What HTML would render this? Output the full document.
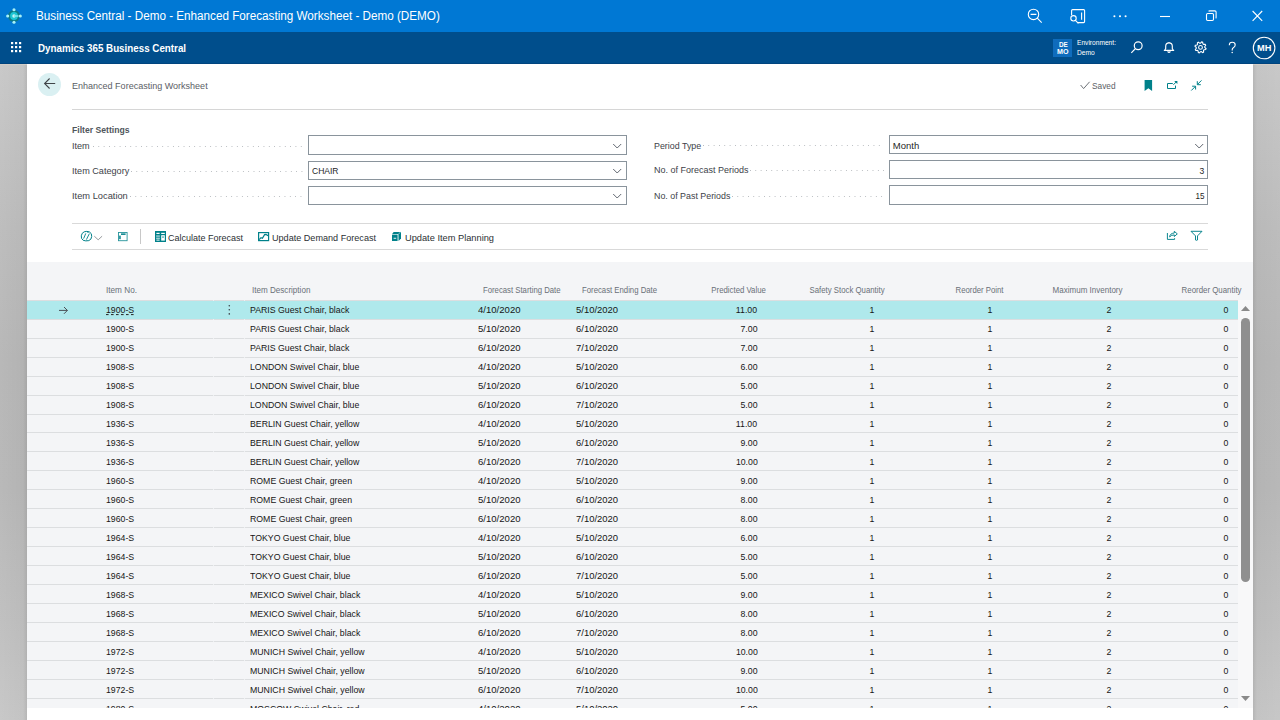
<!DOCTYPE html>
<html><head><meta charset="utf-8"><title>Enhanced Forecasting Worksheet</title>
<style>
html,body{margin:0;padding:0;width:1280px;height:720px;overflow:hidden;background:#fff;font-family:"Liberation Sans",sans-serif;}
body{position:relative;}
.t{position:absolute;white-space:nowrap;line-height:0;height:0;transform-origin:left;}
.a{position:absolute;box-sizing:border-box;}
#tclip{position:absolute;left:0;top:0;width:1280px;height:708px;overflow:hidden;}
svg{position:absolute;overflow:visible;}

</style></head><body>
<div class="a" style="left:0;top:0;width:1280px;height:32px;background:#0078d4"></div><div class="a" style="left:0;top:32px;width:1280px;height:32px;background:#004e8c"></div><div class="a" style="left:0;top:64px;width:27px;height:656px;background:linear-gradient(90deg,rgba(255,255,255,0.07),rgba(255,255,255,0) 85%,rgba(0,0,0,0.07)),linear-gradient(180deg,#c5c5c5 0%,#b9b9b9 25%,#b3b3b3 45%,#b4b4b4 65%,#bcbcbc 85%,#c4c4c4 100%)"></div><div class="a" style="left:1253px;top:64px;width:27px;height:656px;background:linear-gradient(90deg,rgba(0,0,0,0.07),rgba(0,0,0,0) 15%,rgba(255,255,255,0.06)),linear-gradient(180deg,#c5c5c5 0%,#b9b9b9 25%,#b3b3b3 45%,#b4b4b4 65%,#bcbcbc 85%,#c4c4c4 100%)"></div><div class="a" style="left:0;top:64px;width:27px;height:1px;background:#d3cdc7"></div><div class="a" style="left:1253px;top:64px;width:27px;height:1px;background:#d3cdc7"></div><div class="a" style="left:0;top:63px;width:1280px;height:1px;background:#00447e"></div><div class="a" style="left:1053px;top:39px;width:19px;height:18px;background:#0f6cbd"></div><div class="a" style="left:72px;top:109px;width:1136px;height:1px;background:#d6d6d6"></div><div class="a" style="left:38px;top:73px;width:23px;height:23px;border-radius:50%;background:#daf0f2"></div><div class="a" style="left:308px;top:135px;width:319px;height:20px;border:1px solid #8a949c;background:#fff"></div><div class="a" style="left:308px;top:161px;width:319px;height:19px;border:1px solid #8a949c;background:#fff"></div><div class="a" style="left:308px;top:186px;width:319px;height:19px;border:1px solid #8a949c;background:#fff"></div><div class="a" style="left:889px;top:135px;width:319px;height:19px;border:1px solid #8a949c;background:#fff"></div><div class="a" style="left:889px;top:160px;width:319px;height:19px;border:1px solid #8a949c;background:#fff"></div><div class="a" style="left:889px;top:185px;width:319px;height:20px;border:1px solid #8a949c;background:#fff"></div><div class="a" style="left:72px;top:223px;width:1136px;height:1px;background:#d9d9d9"></div><div class="a" style="left:72px;top:249px;width:1136px;height:1px;background:#d9d9d9"></div><div class="a" style="left:140px;top:229px;width:1px;height:15px;background:#c8c8c8"></div><div class="a" style="left:27px;top:262px;width:1226px;height:446px;background:#f4f5f7"></div><div class="a" style="left:1238px;top:300px;width:15px;height:408px;background:#f8f8f9"></div><div class="a" style="left:27px;top:300px;width:1211px;height:1px;background:#dcdee0"></div><div class="a" style="left:27px;top:319px;width:1211px;height:1px;background:#dcdee0"></div><div class="a" style="left:27px;top:338px;width:1211px;height:1px;background:#dcdee0"></div><div class="a" style="left:27px;top:357px;width:1211px;height:1px;background:#dcdee0"></div><div class="a" style="left:27px;top:376px;width:1211px;height:1px;background:#dcdee0"></div><div class="a" style="left:27px;top:395px;width:1211px;height:1px;background:#dcdee0"></div><div class="a" style="left:27px;top:414px;width:1211px;height:1px;background:#dcdee0"></div><div class="a" style="left:27px;top:432px;width:1211px;height:1px;background:#dcdee0"></div><div class="a" style="left:27px;top:451px;width:1211px;height:1px;background:#dcdee0"></div><div class="a" style="left:27px;top:470px;width:1211px;height:1px;background:#dcdee0"></div><div class="a" style="left:27px;top:489px;width:1211px;height:1px;background:#dcdee0"></div><div class="a" style="left:27px;top:508px;width:1211px;height:1px;background:#dcdee0"></div><div class="a" style="left:27px;top:527px;width:1211px;height:1px;background:#dcdee0"></div><div class="a" style="left:27px;top:546px;width:1211px;height:1px;background:#dcdee0"></div><div class="a" style="left:27px;top:565px;width:1211px;height:1px;background:#dcdee0"></div><div class="a" style="left:27px;top:584px;width:1211px;height:1px;background:#dcdee0"></div><div class="a" style="left:27px;top:603px;width:1211px;height:1px;background:#dcdee0"></div><div class="a" style="left:27px;top:622px;width:1211px;height:1px;background:#dcdee0"></div><div class="a" style="left:27px;top:641px;width:1211px;height:1px;background:#dcdee0"></div><div class="a" style="left:27px;top:660px;width:1211px;height:1px;background:#dcdee0"></div><div class="a" style="left:27px;top:679px;width:1211px;height:1px;background:#dcdee0"></div><div class="a" style="left:27px;top:698px;width:1211px;height:1px;background:#dcdee0"></div><div class="a" style="left:27px;top:301px;width:1211px;height:18px;background:#afe9ec"></div><div class="a" style="left:213px;top:300px;width:1px;height:1px;background:#eef0f2"></div><div class="a" style="left:244px;top:300px;width:1px;height:1px;background:#eef0f2"></div><div class="a" style="left:213px;top:319px;width:1px;height:1px;background:#eef0f2"></div><div class="a" style="left:244px;top:319px;width:1px;height:1px;background:#eef0f2"></div><div class="a" style="left:213px;top:338px;width:1px;height:1px;background:#eef0f2"></div><div class="a" style="left:244px;top:338px;width:1px;height:1px;background:#eef0f2"></div><div class="a" style="left:213px;top:357px;width:1px;height:1px;background:#eef0f2"></div><div class="a" style="left:244px;top:357px;width:1px;height:1px;background:#eef0f2"></div><div class="a" style="left:213px;top:376px;width:1px;height:1px;background:#eef0f2"></div><div class="a" style="left:244px;top:376px;width:1px;height:1px;background:#eef0f2"></div><div class="a" style="left:213px;top:395px;width:1px;height:1px;background:#eef0f2"></div><div class="a" style="left:244px;top:395px;width:1px;height:1px;background:#eef0f2"></div><div class="a" style="left:213px;top:414px;width:1px;height:1px;background:#eef0f2"></div><div class="a" style="left:244px;top:414px;width:1px;height:1px;background:#eef0f2"></div><div class="a" style="left:213px;top:432px;width:1px;height:1px;background:#eef0f2"></div><div class="a" style="left:244px;top:432px;width:1px;height:1px;background:#eef0f2"></div><div class="a" style="left:213px;top:451px;width:1px;height:1px;background:#eef0f2"></div><div class="a" style="left:244px;top:451px;width:1px;height:1px;background:#eef0f2"></div><div class="a" style="left:213px;top:470px;width:1px;height:1px;background:#eef0f2"></div><div class="a" style="left:244px;top:470px;width:1px;height:1px;background:#eef0f2"></div><div class="a" style="left:213px;top:489px;width:1px;height:1px;background:#eef0f2"></div><div class="a" style="left:244px;top:489px;width:1px;height:1px;background:#eef0f2"></div><div class="a" style="left:213px;top:508px;width:1px;height:1px;background:#eef0f2"></div><div class="a" style="left:244px;top:508px;width:1px;height:1px;background:#eef0f2"></div><div class="a" style="left:213px;top:527px;width:1px;height:1px;background:#eef0f2"></div><div class="a" style="left:244px;top:527px;width:1px;height:1px;background:#eef0f2"></div><div class="a" style="left:213px;top:546px;width:1px;height:1px;background:#eef0f2"></div><div class="a" style="left:244px;top:546px;width:1px;height:1px;background:#eef0f2"></div><div class="a" style="left:213px;top:565px;width:1px;height:1px;background:#eef0f2"></div><div class="a" style="left:244px;top:565px;width:1px;height:1px;background:#eef0f2"></div><div class="a" style="left:213px;top:584px;width:1px;height:1px;background:#eef0f2"></div><div class="a" style="left:244px;top:584px;width:1px;height:1px;background:#eef0f2"></div><div class="a" style="left:213px;top:603px;width:1px;height:1px;background:#eef0f2"></div><div class="a" style="left:244px;top:603px;width:1px;height:1px;background:#eef0f2"></div><div class="a" style="left:213px;top:622px;width:1px;height:1px;background:#eef0f2"></div><div class="a" style="left:244px;top:622px;width:1px;height:1px;background:#eef0f2"></div><div class="a" style="left:213px;top:641px;width:1px;height:1px;background:#eef0f2"></div><div class="a" style="left:244px;top:641px;width:1px;height:1px;background:#eef0f2"></div><div class="a" style="left:213px;top:660px;width:1px;height:1px;background:#eef0f2"></div><div class="a" style="left:244px;top:660px;width:1px;height:1px;background:#eef0f2"></div><div class="a" style="left:213px;top:679px;width:1px;height:1px;background:#eef0f2"></div><div class="a" style="left:244px;top:679px;width:1px;height:1px;background:#eef0f2"></div><div class="a" style="left:213px;top:698px;width:1px;height:1px;background:#eef0f2"></div><div class="a" style="left:244px;top:698px;width:1px;height:1px;background:#eef0f2"></div><div class="a" style="left:93px;top:146px;width:210px;height:1px;background-image:linear-gradient(90deg,#b4b8bc 0,#b4b8bc 1px,transparent 1px);background-size:5.33px 1px"></div><div class="a" style="left:131px;top:171px;width:172px;height:1px;background-image:linear-gradient(90deg,#b4b8bc 0,#b4b8bc 1px,transparent 1px);background-size:5.33px 1px"></div><div class="a" style="left:130px;top:196px;width:173px;height:1px;background-image:linear-gradient(90deg,#b4b8bc 0,#b4b8bc 1px,transparent 1px);background-size:5.33px 1px"></div><div class="a" style="left:703px;top:145px;width:181px;height:1px;background-image:linear-gradient(90deg,#b4b8bc 0,#b4b8bc 1px,transparent 1px);background-size:5.33px 1px"></div><div class="a" style="left:750px;top:170px;width:134px;height:1px;background-image:linear-gradient(90deg,#b4b8bc 0,#b4b8bc 1px,transparent 1px);background-size:5.33px 1px"></div><div class="a" style="left:732px;top:196px;width:152px;height:1px;background-image:linear-gradient(90deg,#b4b8bc 0,#b4b8bc 1px,transparent 1px);background-size:5.33px 1px"></div>
<div class="t" style="top:15.84px;font-size:12px;color:#fff;left:36.00px;transform:scaleX(0.974);">Business Central - Demo - Enhanced Forecasting Worksheet - Demo (DEMO)</div><div class="t" style="top:48.08px;font-size:11.3px;color:#fff;font-weight:700;left:37.80px;transform:scaleX(0.867);">Dynamics 365 Business Central</div><div class="t" style="top:42.57px;font-size:7px;color:#fff;left:1077.00px;transform:scaleX(0.945);">Environment:</div><div class="t" style="top:52.57px;font-size:7px;color:#fff;left:1077.00px;transform:scaleX(0.947);">Demo</div><div class="t" style="top:44.75px;font-size:6.5px;color:#fff;font-weight:700;left:1058.70px;transform:scaleX(0.974);">DE</div><div class="t" style="top:51.75px;font-size:6.5px;color:#fff;font-weight:700;left:1057.20px;transform:scaleX(1.097);">MO</div><div class="t" style="top:47.71px;font-size:9.5px;color:#fff;font-weight:700;left:1257.20px;transform:scaleX(0.974);">MH</div><div class="t" style="top:85.71px;font-size:9.5px;color:#5b6066;left:72.30px;transform:scaleX(0.949);">Enhanced Forecasting Worksheet</div><div class="t" style="top:85.71px;font-size:9.5px;color:#5b6066;left:1091.70px;transform:scaleX(0.872);">Saved</div><div class="t" style="top:129.71px;font-size:9.5px;color:#50565c;font-weight:700;left:72.20px;transform:scaleX(0.908);">Filter Settings</div><div class="t" style="top:145.71px;font-size:9.5px;color:#3d4248;left:72.20px;transform:scaleX(0.958);">Item</div><div class="t" style="top:170.71px;font-size:9.5px;color:#3d4248;left:72.20px;transform:scaleX(0.959);">Item Category</div><div class="t" style="top:195.71px;font-size:9.5px;color:#3d4248;left:72.20px;transform:scaleX(0.978);">Item Location</div><div class="t" style="top:145.71px;font-size:9.5px;color:#3d4248;left:653.80px;transform:scaleX(0.934);">Period Type</div><div class="t" style="top:169.71px;font-size:9.5px;color:#3d4248;left:653.80px;transform:scaleX(0.946);">No. of Forecast Periods</div><div class="t" style="top:195.71px;font-size:9.5px;color:#3d4248;left:653.80px;transform:scaleX(0.933);">No. of Past Periods</div><div class="t" style="top:170.71px;font-size:9.5px;color:#1f1f1f;left:311.70px;transform:scaleX(0.896);">CHAIR</div><div class="t" style="top:145.71px;font-size:9.5px;color:#1f1f1f;left:892.80px;">Month</div><div class="t" style="top:170.71px;font-size:9.5px;color:#1f1f1f;right:75.90px;transform-origin:right;transform:scaleX(0.900);">3</div><div class="t" style="top:195.71px;font-size:9.5px;color:#1f1f1f;right:75.90px;transform-origin:right;transform:scaleX(0.851);">15</div><div class="t" style="top:237.71px;font-size:9.5px;color:#2b2f33;left:168.00px;transform:scaleX(0.947);">Calculate Forecast</div><div class="t" style="top:237.71px;font-size:9.5px;color:#2b2f33;left:271.50px;transform:scaleX(0.956);">Update Demand Forecast</div><div class="t" style="top:237.71px;font-size:9.5px;color:#2b2f33;left:404.90px;transform:scaleX(0.974);">Update Item Planning</div><div class="t" style="top:289.88px;font-size:9px;color:#6a7077;left:106.00px;transform:scaleX(0.911);">Item No.</div><div class="t" style="top:289.88px;font-size:9px;color:#6a7077;left:251.60px;transform:scaleX(0.898);">Item Description</div><div class="t" style="top:289.88px;font-size:9px;color:#6a7077;left:483.00px;transform:scaleX(0.861);">Forecast Starting Date</div><div class="t" style="top:289.88px;font-size:9px;color:#6a7077;left:582.00px;transform:scaleX(0.862);">Forecast Ending Date</div><div class="t" style="top:289.88px;font-size:9px;color:#6a7077;right:514.50px;transform-origin:right;transform:scaleX(0.867);">Predicted Value</div><div class="t" style="top:289.88px;font-size:9px;color:#6a7077;right:395.30px;transform-origin:right;transform:scaleX(0.867);">Safety Stock Quantity</div><div class="t" style="top:289.88px;font-size:9px;color:#6a7077;right:276.00px;transform-origin:right;transform:scaleX(0.864);">Reorder Point</div><div class="t" style="top:289.88px;font-size:9px;color:#6a7077;right:157.20px;transform-origin:right;transform:scaleX(0.891);">Maximum Inventory</div><div class="t" style="top:289.88px;font-size:9px;color:#6a7077;right:38.20px;transform-origin:right;transform:scaleX(0.875);">Reorder Quantity</div>
<div id="tclip">
<div class="t" style="top:309.71px;font-size:9.5px;color:#161616;left:106.00px;transform:scaleX(0.920);">1900-S</div><div class="t" style="top:309.71px;font-size:9.5px;color:#161616;left:249.70px;transform:scaleX(0.920);">PARIS Guest Chair, black</div><div class="t" style="top:309.71px;font-size:9.5px;color:#161616;left:477.50px;transform:scaleX(1.006);">4/10/2020</div><div class="t" style="top:309.71px;font-size:9.5px;color:#161616;left:576.00px;transform:scaleX(0.994);">5/10/2020</div><div class="t" style="top:309.71px;font-size:9.5px;color:#161616;right:522.50px;transform-origin:right;transform:scaleX(0.920);">11.00</div><div class="t" style="top:309.71px;font-size:9.5px;color:#161616;right:405.50px;transform-origin:right;transform:scaleX(0.920);">1</div><div class="t" style="top:309.71px;font-size:9.5px;color:#161616;right:287.90px;transform-origin:right;transform:scaleX(0.920);">1</div><div class="t" style="top:309.71px;font-size:9.5px;color:#161616;right:169.20px;transform-origin:right;transform:scaleX(0.920);">2</div><div class="t" style="top:309.71px;font-size:9.5px;color:#161616;right:51.70px;transform-origin:right;transform:scaleX(0.920);">0</div><div class="t" style="top:328.71px;font-size:9.5px;color:#161616;left:106.00px;transform:scaleX(0.920);">1900-S</div><div class="t" style="top:328.71px;font-size:9.5px;color:#161616;left:249.70px;transform:scaleX(0.920);">PARIS Guest Chair, black</div><div class="t" style="top:328.71px;font-size:9.5px;color:#161616;left:477.50px;transform:scaleX(1.006);">5/10/2020</div><div class="t" style="top:328.71px;font-size:9.5px;color:#161616;left:576.00px;transform:scaleX(0.994);">6/10/2020</div><div class="t" style="top:328.71px;font-size:9.5px;color:#161616;right:522.50px;transform-origin:right;transform:scaleX(0.920);">7.00</div><div class="t" style="top:328.71px;font-size:9.5px;color:#161616;right:405.50px;transform-origin:right;transform:scaleX(0.920);">1</div><div class="t" style="top:328.71px;font-size:9.5px;color:#161616;right:287.90px;transform-origin:right;transform:scaleX(0.920);">1</div><div class="t" style="top:328.71px;font-size:9.5px;color:#161616;right:169.20px;transform-origin:right;transform:scaleX(0.920);">2</div><div class="t" style="top:328.71px;font-size:9.5px;color:#161616;right:51.70px;transform-origin:right;transform:scaleX(0.920);">0</div><div class="t" style="top:347.71px;font-size:9.5px;color:#161616;left:106.00px;transform:scaleX(0.920);">1900-S</div><div class="t" style="top:347.71px;font-size:9.5px;color:#161616;left:249.70px;transform:scaleX(0.920);">PARIS Guest Chair, black</div><div class="t" style="top:347.71px;font-size:9.5px;color:#161616;left:477.50px;transform:scaleX(1.006);">6/10/2020</div><div class="t" style="top:347.71px;font-size:9.5px;color:#161616;left:576.00px;transform:scaleX(0.994);">7/10/2020</div><div class="t" style="top:347.71px;font-size:9.5px;color:#161616;right:522.50px;transform-origin:right;transform:scaleX(0.920);">7.00</div><div class="t" style="top:347.71px;font-size:9.5px;color:#161616;right:405.50px;transform-origin:right;transform:scaleX(0.920);">1</div><div class="t" style="top:347.71px;font-size:9.5px;color:#161616;right:287.90px;transform-origin:right;transform:scaleX(0.920);">1</div><div class="t" style="top:347.71px;font-size:9.5px;color:#161616;right:169.20px;transform-origin:right;transform:scaleX(0.920);">2</div><div class="t" style="top:347.71px;font-size:9.5px;color:#161616;right:51.70px;transform-origin:right;transform:scaleX(0.920);">0</div><div class="t" style="top:366.71px;font-size:9.5px;color:#161616;left:106.00px;transform:scaleX(0.920);">1908-S</div><div class="t" style="top:366.71px;font-size:9.5px;color:#161616;left:249.70px;transform:scaleX(0.920);">LONDON Swivel Chair, blue</div><div class="t" style="top:366.71px;font-size:9.5px;color:#161616;left:477.50px;transform:scaleX(1.006);">4/10/2020</div><div class="t" style="top:366.71px;font-size:9.5px;color:#161616;left:576.00px;transform:scaleX(0.994);">5/10/2020</div><div class="t" style="top:366.71px;font-size:9.5px;color:#161616;right:522.50px;transform-origin:right;transform:scaleX(0.920);">6.00</div><div class="t" style="top:366.71px;font-size:9.5px;color:#161616;right:405.50px;transform-origin:right;transform:scaleX(0.920);">1</div><div class="t" style="top:366.71px;font-size:9.5px;color:#161616;right:287.90px;transform-origin:right;transform:scaleX(0.920);">1</div><div class="t" style="top:366.71px;font-size:9.5px;color:#161616;right:169.20px;transform-origin:right;transform:scaleX(0.920);">2</div><div class="t" style="top:366.71px;font-size:9.5px;color:#161616;right:51.70px;transform-origin:right;transform:scaleX(0.920);">0</div><div class="t" style="top:385.71px;font-size:9.5px;color:#161616;left:106.00px;transform:scaleX(0.920);">1908-S</div><div class="t" style="top:385.71px;font-size:9.5px;color:#161616;left:249.70px;transform:scaleX(0.920);">LONDON Swivel Chair, blue</div><div class="t" style="top:385.71px;font-size:9.5px;color:#161616;left:477.50px;transform:scaleX(1.006);">5/10/2020</div><div class="t" style="top:385.71px;font-size:9.5px;color:#161616;left:576.00px;transform:scaleX(0.994);">6/10/2020</div><div class="t" style="top:385.71px;font-size:9.5px;color:#161616;right:522.50px;transform-origin:right;transform:scaleX(0.920);">5.00</div><div class="t" style="top:385.71px;font-size:9.5px;color:#161616;right:405.50px;transform-origin:right;transform:scaleX(0.920);">1</div><div class="t" style="top:385.71px;font-size:9.5px;color:#161616;right:287.90px;transform-origin:right;transform:scaleX(0.920);">1</div><div class="t" style="top:385.71px;font-size:9.5px;color:#161616;right:169.20px;transform-origin:right;transform:scaleX(0.920);">2</div><div class="t" style="top:385.71px;font-size:9.5px;color:#161616;right:51.70px;transform-origin:right;transform:scaleX(0.920);">0</div><div class="t" style="top:404.71px;font-size:9.5px;color:#161616;left:106.00px;transform:scaleX(0.920);">1908-S</div><div class="t" style="top:404.71px;font-size:9.5px;color:#161616;left:249.70px;transform:scaleX(0.920);">LONDON Swivel Chair, blue</div><div class="t" style="top:404.71px;font-size:9.5px;color:#161616;left:477.50px;transform:scaleX(1.006);">6/10/2020</div><div class="t" style="top:404.71px;font-size:9.5px;color:#161616;left:576.00px;transform:scaleX(0.994);">7/10/2020</div><div class="t" style="top:404.71px;font-size:9.5px;color:#161616;right:522.50px;transform-origin:right;transform:scaleX(0.920);">5.00</div><div class="t" style="top:404.71px;font-size:9.5px;color:#161616;right:405.50px;transform-origin:right;transform:scaleX(0.920);">1</div><div class="t" style="top:404.71px;font-size:9.5px;color:#161616;right:287.90px;transform-origin:right;transform:scaleX(0.920);">1</div><div class="t" style="top:404.71px;font-size:9.5px;color:#161616;right:169.20px;transform-origin:right;transform:scaleX(0.920);">2</div><div class="t" style="top:404.71px;font-size:9.5px;color:#161616;right:51.70px;transform-origin:right;transform:scaleX(0.920);">0</div><div class="t" style="top:423.71px;font-size:9.5px;color:#161616;left:106.00px;transform:scaleX(0.920);">1936-S</div><div class="t" style="top:423.71px;font-size:9.5px;color:#161616;left:249.70px;transform:scaleX(0.920);">BERLIN Guest Chair, yellow</div><div class="t" style="top:423.71px;font-size:9.5px;color:#161616;left:477.50px;transform:scaleX(1.006);">4/10/2020</div><div class="t" style="top:423.71px;font-size:9.5px;color:#161616;left:576.00px;transform:scaleX(0.994);">5/10/2020</div><div class="t" style="top:423.71px;font-size:9.5px;color:#161616;right:522.50px;transform-origin:right;transform:scaleX(0.920);">11.00</div><div class="t" style="top:423.71px;font-size:9.5px;color:#161616;right:405.50px;transform-origin:right;transform:scaleX(0.920);">1</div><div class="t" style="top:423.71px;font-size:9.5px;color:#161616;right:287.90px;transform-origin:right;transform:scaleX(0.920);">1</div><div class="t" style="top:423.71px;font-size:9.5px;color:#161616;right:169.20px;transform-origin:right;transform:scaleX(0.920);">2</div><div class="t" style="top:423.71px;font-size:9.5px;color:#161616;right:51.70px;transform-origin:right;transform:scaleX(0.920);">0</div><div class="t" style="top:442.71px;font-size:9.5px;color:#161616;left:106.00px;transform:scaleX(0.920);">1936-S</div><div class="t" style="top:442.71px;font-size:9.5px;color:#161616;left:249.70px;transform:scaleX(0.920);">BERLIN Guest Chair, yellow</div><div class="t" style="top:442.71px;font-size:9.5px;color:#161616;left:477.50px;transform:scaleX(1.006);">5/10/2020</div><div class="t" style="top:442.71px;font-size:9.5px;color:#161616;left:576.00px;transform:scaleX(0.994);">6/10/2020</div><div class="t" style="top:442.71px;font-size:9.5px;color:#161616;right:522.50px;transform-origin:right;transform:scaleX(0.920);">9.00</div><div class="t" style="top:442.71px;font-size:9.5px;color:#161616;right:405.50px;transform-origin:right;transform:scaleX(0.920);">1</div><div class="t" style="top:442.71px;font-size:9.5px;color:#161616;right:287.90px;transform-origin:right;transform:scaleX(0.920);">1</div><div class="t" style="top:442.71px;font-size:9.5px;color:#161616;right:169.20px;transform-origin:right;transform:scaleX(0.920);">2</div><div class="t" style="top:442.71px;font-size:9.5px;color:#161616;right:51.70px;transform-origin:right;transform:scaleX(0.920);">0</div><div class="t" style="top:461.71px;font-size:9.5px;color:#161616;left:106.00px;transform:scaleX(0.920);">1936-S</div><div class="t" style="top:461.71px;font-size:9.5px;color:#161616;left:249.70px;transform:scaleX(0.920);">BERLIN Guest Chair, yellow</div><div class="t" style="top:461.71px;font-size:9.5px;color:#161616;left:477.50px;transform:scaleX(1.006);">6/10/2020</div><div class="t" style="top:461.71px;font-size:9.5px;color:#161616;left:576.00px;transform:scaleX(0.994);">7/10/2020</div><div class="t" style="top:461.71px;font-size:9.5px;color:#161616;right:522.50px;transform-origin:right;transform:scaleX(0.920);">10.00</div><div class="t" style="top:461.71px;font-size:9.5px;color:#161616;right:405.50px;transform-origin:right;transform:scaleX(0.920);">1</div><div class="t" style="top:461.71px;font-size:9.5px;color:#161616;right:287.90px;transform-origin:right;transform:scaleX(0.920);">1</div><div class="t" style="top:461.71px;font-size:9.5px;color:#161616;right:169.20px;transform-origin:right;transform:scaleX(0.920);">2</div><div class="t" style="top:461.71px;font-size:9.5px;color:#161616;right:51.70px;transform-origin:right;transform:scaleX(0.920);">0</div><div class="t" style="top:480.71px;font-size:9.5px;color:#161616;left:106.00px;transform:scaleX(0.920);">1960-S</div><div class="t" style="top:480.71px;font-size:9.5px;color:#161616;left:249.70px;transform:scaleX(0.920);">ROME Guest Chair, green</div><div class="t" style="top:480.71px;font-size:9.5px;color:#161616;left:477.50px;transform:scaleX(1.006);">4/10/2020</div><div class="t" style="top:480.71px;font-size:9.5px;color:#161616;left:576.00px;transform:scaleX(0.994);">5/10/2020</div><div class="t" style="top:480.71px;font-size:9.5px;color:#161616;right:522.50px;transform-origin:right;transform:scaleX(0.920);">9.00</div><div class="t" style="top:480.71px;font-size:9.5px;color:#161616;right:405.50px;transform-origin:right;transform:scaleX(0.920);">1</div><div class="t" style="top:480.71px;font-size:9.5px;color:#161616;right:287.90px;transform-origin:right;transform:scaleX(0.920);">1</div><div class="t" style="top:480.71px;font-size:9.5px;color:#161616;right:169.20px;transform-origin:right;transform:scaleX(0.920);">2</div><div class="t" style="top:480.71px;font-size:9.5px;color:#161616;right:51.70px;transform-origin:right;transform:scaleX(0.920);">0</div><div class="t" style="top:499.71px;font-size:9.5px;color:#161616;left:106.00px;transform:scaleX(0.920);">1960-S</div><div class="t" style="top:499.71px;font-size:9.5px;color:#161616;left:249.70px;transform:scaleX(0.920);">ROME Guest Chair, green</div><div class="t" style="top:499.71px;font-size:9.5px;color:#161616;left:477.50px;transform:scaleX(1.006);">5/10/2020</div><div class="t" style="top:499.71px;font-size:9.5px;color:#161616;left:576.00px;transform:scaleX(0.994);">6/10/2020</div><div class="t" style="top:499.71px;font-size:9.5px;color:#161616;right:522.50px;transform-origin:right;transform:scaleX(0.920);">8.00</div><div class="t" style="top:499.71px;font-size:9.5px;color:#161616;right:405.50px;transform-origin:right;transform:scaleX(0.920);">1</div><div class="t" style="top:499.71px;font-size:9.5px;color:#161616;right:287.90px;transform-origin:right;transform:scaleX(0.920);">1</div><div class="t" style="top:499.71px;font-size:9.5px;color:#161616;right:169.20px;transform-origin:right;transform:scaleX(0.920);">2</div><div class="t" style="top:499.71px;font-size:9.5px;color:#161616;right:51.70px;transform-origin:right;transform:scaleX(0.920);">0</div><div class="t" style="top:518.71px;font-size:9.5px;color:#161616;left:106.00px;transform:scaleX(0.920);">1960-S</div><div class="t" style="top:518.71px;font-size:9.5px;color:#161616;left:249.70px;transform:scaleX(0.920);">ROME Guest Chair, green</div><div class="t" style="top:518.71px;font-size:9.5px;color:#161616;left:477.50px;transform:scaleX(1.006);">6/10/2020</div><div class="t" style="top:518.71px;font-size:9.5px;color:#161616;left:576.00px;transform:scaleX(0.994);">7/10/2020</div><div class="t" style="top:518.71px;font-size:9.5px;color:#161616;right:522.50px;transform-origin:right;transform:scaleX(0.920);">8.00</div><div class="t" style="top:518.71px;font-size:9.5px;color:#161616;right:405.50px;transform-origin:right;transform:scaleX(0.920);">1</div><div class="t" style="top:518.71px;font-size:9.5px;color:#161616;right:287.90px;transform-origin:right;transform:scaleX(0.920);">1</div><div class="t" style="top:518.71px;font-size:9.5px;color:#161616;right:169.20px;transform-origin:right;transform:scaleX(0.920);">2</div><div class="t" style="top:518.71px;font-size:9.5px;color:#161616;right:51.70px;transform-origin:right;transform:scaleX(0.920);">0</div><div class="t" style="top:537.71px;font-size:9.5px;color:#161616;left:106.00px;transform:scaleX(0.920);">1964-S</div><div class="t" style="top:537.71px;font-size:9.5px;color:#161616;left:249.70px;transform:scaleX(0.920);">TOKYO Guest Chair, blue</div><div class="t" style="top:537.71px;font-size:9.5px;color:#161616;left:477.50px;transform:scaleX(1.006);">4/10/2020</div><div class="t" style="top:537.71px;font-size:9.5px;color:#161616;left:576.00px;transform:scaleX(0.994);">5/10/2020</div><div class="t" style="top:537.71px;font-size:9.5px;color:#161616;right:522.50px;transform-origin:right;transform:scaleX(0.920);">6.00</div><div class="t" style="top:537.71px;font-size:9.5px;color:#161616;right:405.50px;transform-origin:right;transform:scaleX(0.920);">1</div><div class="t" style="top:537.71px;font-size:9.5px;color:#161616;right:287.90px;transform-origin:right;transform:scaleX(0.920);">1</div><div class="t" style="top:537.71px;font-size:9.5px;color:#161616;right:169.20px;transform-origin:right;transform:scaleX(0.920);">2</div><div class="t" style="top:537.71px;font-size:9.5px;color:#161616;right:51.70px;transform-origin:right;transform:scaleX(0.920);">0</div><div class="t" style="top:556.71px;font-size:9.5px;color:#161616;left:106.00px;transform:scaleX(0.920);">1964-S</div><div class="t" style="top:556.71px;font-size:9.5px;color:#161616;left:249.70px;transform:scaleX(0.920);">TOKYO Guest Chair, blue</div><div class="t" style="top:556.71px;font-size:9.5px;color:#161616;left:477.50px;transform:scaleX(1.006);">5/10/2020</div><div class="t" style="top:556.71px;font-size:9.5px;color:#161616;left:576.00px;transform:scaleX(0.994);">6/10/2020</div><div class="t" style="top:556.71px;font-size:9.5px;color:#161616;right:522.50px;transform-origin:right;transform:scaleX(0.920);">5.00</div><div class="t" style="top:556.71px;font-size:9.5px;color:#161616;right:405.50px;transform-origin:right;transform:scaleX(0.920);">1</div><div class="t" style="top:556.71px;font-size:9.5px;color:#161616;right:287.90px;transform-origin:right;transform:scaleX(0.920);">1</div><div class="t" style="top:556.71px;font-size:9.5px;color:#161616;right:169.20px;transform-origin:right;transform:scaleX(0.920);">2</div><div class="t" style="top:556.71px;font-size:9.5px;color:#161616;right:51.70px;transform-origin:right;transform:scaleX(0.920);">0</div><div class="t" style="top:575.71px;font-size:9.5px;color:#161616;left:106.00px;transform:scaleX(0.920);">1964-S</div><div class="t" style="top:575.71px;font-size:9.5px;color:#161616;left:249.70px;transform:scaleX(0.920);">TOKYO Guest Chair, blue</div><div class="t" style="top:575.71px;font-size:9.5px;color:#161616;left:477.50px;transform:scaleX(1.006);">6/10/2020</div><div class="t" style="top:575.71px;font-size:9.5px;color:#161616;left:576.00px;transform:scaleX(0.994);">7/10/2020</div><div class="t" style="top:575.71px;font-size:9.5px;color:#161616;right:522.50px;transform-origin:right;transform:scaleX(0.920);">5.00</div><div class="t" style="top:575.71px;font-size:9.5px;color:#161616;right:405.50px;transform-origin:right;transform:scaleX(0.920);">1</div><div class="t" style="top:575.71px;font-size:9.5px;color:#161616;right:287.90px;transform-origin:right;transform:scaleX(0.920);">1</div><div class="t" style="top:575.71px;font-size:9.5px;color:#161616;right:169.20px;transform-origin:right;transform:scaleX(0.920);">2</div><div class="t" style="top:575.71px;font-size:9.5px;color:#161616;right:51.70px;transform-origin:right;transform:scaleX(0.920);">0</div><div class="t" style="top:594.71px;font-size:9.5px;color:#161616;left:106.00px;transform:scaleX(0.920);">1968-S</div><div class="t" style="top:594.71px;font-size:9.5px;color:#161616;left:249.70px;transform:scaleX(0.920);">MEXICO Swivel Chair, black</div><div class="t" style="top:594.71px;font-size:9.5px;color:#161616;left:477.50px;transform:scaleX(1.006);">4/10/2020</div><div class="t" style="top:594.71px;font-size:9.5px;color:#161616;left:576.00px;transform:scaleX(0.994);">5/10/2020</div><div class="t" style="top:594.71px;font-size:9.5px;color:#161616;right:522.50px;transform-origin:right;transform:scaleX(0.920);">9.00</div><div class="t" style="top:594.71px;font-size:9.5px;color:#161616;right:405.50px;transform-origin:right;transform:scaleX(0.920);">1</div><div class="t" style="top:594.71px;font-size:9.5px;color:#161616;right:287.90px;transform-origin:right;transform:scaleX(0.920);">1</div><div class="t" style="top:594.71px;font-size:9.5px;color:#161616;right:169.20px;transform-origin:right;transform:scaleX(0.920);">2</div><div class="t" style="top:594.71px;font-size:9.5px;color:#161616;right:51.70px;transform-origin:right;transform:scaleX(0.920);">0</div><div class="t" style="top:613.71px;font-size:9.5px;color:#161616;left:106.00px;transform:scaleX(0.920);">1968-S</div><div class="t" style="top:613.71px;font-size:9.5px;color:#161616;left:249.70px;transform:scaleX(0.920);">MEXICO Swivel Chair, black</div><div class="t" style="top:613.71px;font-size:9.5px;color:#161616;left:477.50px;transform:scaleX(1.006);">5/10/2020</div><div class="t" style="top:613.71px;font-size:9.5px;color:#161616;left:576.00px;transform:scaleX(0.994);">6/10/2020</div><div class="t" style="top:613.71px;font-size:9.5px;color:#161616;right:522.50px;transform-origin:right;transform:scaleX(0.920);">8.00</div><div class="t" style="top:613.71px;font-size:9.5px;color:#161616;right:405.50px;transform-origin:right;transform:scaleX(0.920);">1</div><div class="t" style="top:613.71px;font-size:9.5px;color:#161616;right:287.90px;transform-origin:right;transform:scaleX(0.920);">1</div><div class="t" style="top:613.71px;font-size:9.5px;color:#161616;right:169.20px;transform-origin:right;transform:scaleX(0.920);">2</div><div class="t" style="top:613.71px;font-size:9.5px;color:#161616;right:51.70px;transform-origin:right;transform:scaleX(0.920);">0</div><div class="t" style="top:632.71px;font-size:9.5px;color:#161616;left:106.00px;transform:scaleX(0.920);">1968-S</div><div class="t" style="top:632.71px;font-size:9.5px;color:#161616;left:249.70px;transform:scaleX(0.920);">MEXICO Swivel Chair, black</div><div class="t" style="top:632.71px;font-size:9.5px;color:#161616;left:477.50px;transform:scaleX(1.006);">6/10/2020</div><div class="t" style="top:632.71px;font-size:9.5px;color:#161616;left:576.00px;transform:scaleX(0.994);">7/10/2020</div><div class="t" style="top:632.71px;font-size:9.5px;color:#161616;right:522.50px;transform-origin:right;transform:scaleX(0.920);">8.00</div><div class="t" style="top:632.71px;font-size:9.5px;color:#161616;right:405.50px;transform-origin:right;transform:scaleX(0.920);">1</div><div class="t" style="top:632.71px;font-size:9.5px;color:#161616;right:287.90px;transform-origin:right;transform:scaleX(0.920);">1</div><div class="t" style="top:632.71px;font-size:9.5px;color:#161616;right:169.20px;transform-origin:right;transform:scaleX(0.920);">2</div><div class="t" style="top:632.71px;font-size:9.5px;color:#161616;right:51.70px;transform-origin:right;transform:scaleX(0.920);">0</div><div class="t" style="top:651.71px;font-size:9.5px;color:#161616;left:106.00px;transform:scaleX(0.920);">1972-S</div><div class="t" style="top:651.71px;font-size:9.5px;color:#161616;left:249.70px;transform:scaleX(0.920);">MUNICH Swivel Chair, yellow</div><div class="t" style="top:651.71px;font-size:9.5px;color:#161616;left:477.50px;transform:scaleX(1.006);">4/10/2020</div><div class="t" style="top:651.71px;font-size:9.5px;color:#161616;left:576.00px;transform:scaleX(0.994);">5/10/2020</div><div class="t" style="top:651.71px;font-size:9.5px;color:#161616;right:522.50px;transform-origin:right;transform:scaleX(0.920);">10.00</div><div class="t" style="top:651.71px;font-size:9.5px;color:#161616;right:405.50px;transform-origin:right;transform:scaleX(0.920);">1</div><div class="t" style="top:651.71px;font-size:9.5px;color:#161616;right:287.90px;transform-origin:right;transform:scaleX(0.920);">1</div><div class="t" style="top:651.71px;font-size:9.5px;color:#161616;right:169.20px;transform-origin:right;transform:scaleX(0.920);">2</div><div class="t" style="top:651.71px;font-size:9.5px;color:#161616;right:51.70px;transform-origin:right;transform:scaleX(0.920);">0</div><div class="t" style="top:670.71px;font-size:9.5px;color:#161616;left:106.00px;transform:scaleX(0.920);">1972-S</div><div class="t" style="top:670.71px;font-size:9.5px;color:#161616;left:249.70px;transform:scaleX(0.920);">MUNICH Swivel Chair, yellow</div><div class="t" style="top:670.71px;font-size:9.5px;color:#161616;left:477.50px;transform:scaleX(1.006);">5/10/2020</div><div class="t" style="top:670.71px;font-size:9.5px;color:#161616;left:576.00px;transform:scaleX(0.994);">6/10/2020</div><div class="t" style="top:670.71px;font-size:9.5px;color:#161616;right:522.50px;transform-origin:right;transform:scaleX(0.920);">9.00</div><div class="t" style="top:670.71px;font-size:9.5px;color:#161616;right:405.50px;transform-origin:right;transform:scaleX(0.920);">1</div><div class="t" style="top:670.71px;font-size:9.5px;color:#161616;right:287.90px;transform-origin:right;transform:scaleX(0.920);">1</div><div class="t" style="top:670.71px;font-size:9.5px;color:#161616;right:169.20px;transform-origin:right;transform:scaleX(0.920);">2</div><div class="t" style="top:670.71px;font-size:9.5px;color:#161616;right:51.70px;transform-origin:right;transform:scaleX(0.920);">0</div><div class="t" style="top:689.71px;font-size:9.5px;color:#161616;left:106.00px;transform:scaleX(0.920);">1972-S</div><div class="t" style="top:689.71px;font-size:9.5px;color:#161616;left:249.70px;transform:scaleX(0.920);">MUNICH Swivel Chair, yellow</div><div class="t" style="top:689.71px;font-size:9.5px;color:#161616;left:477.50px;transform:scaleX(1.006);">6/10/2020</div><div class="t" style="top:689.71px;font-size:9.5px;color:#161616;left:576.00px;transform:scaleX(0.994);">7/10/2020</div><div class="t" style="top:689.71px;font-size:9.5px;color:#161616;right:522.50px;transform-origin:right;transform:scaleX(0.920);">10.00</div><div class="t" style="top:689.71px;font-size:9.5px;color:#161616;right:405.50px;transform-origin:right;transform:scaleX(0.920);">1</div><div class="t" style="top:689.71px;font-size:9.5px;color:#161616;right:287.90px;transform-origin:right;transform:scaleX(0.920);">1</div><div class="t" style="top:689.71px;font-size:9.5px;color:#161616;right:169.20px;transform-origin:right;transform:scaleX(0.920);">2</div><div class="t" style="top:689.71px;font-size:9.5px;color:#161616;right:51.70px;transform-origin:right;transform:scaleX(0.920);">0</div><div class="t" style="top:708.71px;font-size:9.5px;color:#161616;left:106.00px;transform:scaleX(0.920);">1980-S</div><div class="t" style="top:708.71px;font-size:9.5px;color:#161616;left:249.70px;transform:scaleX(0.920);">MOSCOW Swivel Chair, red</div><div class="t" style="top:708.71px;font-size:9.5px;color:#161616;left:477.50px;transform:scaleX(1.006);">4/10/2020</div><div class="t" style="top:708.71px;font-size:9.5px;color:#161616;left:576.00px;transform:scaleX(0.994);">5/10/2020</div><div class="t" style="top:708.71px;font-size:9.5px;color:#161616;right:522.50px;transform-origin:right;transform:scaleX(0.920);">5.00</div><div class="t" style="top:708.71px;font-size:9.5px;color:#161616;right:405.50px;transform-origin:right;transform:scaleX(0.920);">1</div><div class="t" style="top:708.71px;font-size:9.5px;color:#161616;right:287.90px;transform-origin:right;transform:scaleX(0.920);">1</div><div class="t" style="top:708.71px;font-size:9.5px;color:#161616;right:169.20px;transform-origin:right;transform:scaleX(0.920);">2</div><div class="t" style="top:708.71px;font-size:9.5px;color:#161616;right:51.70px;transform-origin:right;transform:scaleX(0.920);">0</div>
</div>
<svg style="left:0;top:0" width="1280" height="720"><path d="M1241 311 L1250 311 L1245.5 306 Z" fill="#8a8a8a"/><path d="M1241 696 L1250 696 L1245.5 701 Z" fill="#8a8a8a"/><rect x="1241" y="318" width="9" height="264" rx="4.5" fill="#8f8f8f"/></svg><svg style="left:0;top:0" width="1280" height="720"><circle cx="14" cy="16" r="6" fill="#0b7a84"/><circle cx="14" cy="16" r="3.9" fill="#1cc6d3"/><circle cx="14" cy="16" r="1.7" fill="#c4f3f6"/><rect x="14" y="15.2" width="4.5" height="1.6" fill="#7fe3ea"/><circle cx="14" cy="9.7" r="1.55" fill="#a8f1f6"/><circle cx="14" cy="22.3" r="1.55" fill="#a8f1f6"/><circle cx="7.7" cy="16" r="1.55" fill="#a8f1f6"/><circle cx="20.3" cy="16" r="1.55" fill="#a8f1f6"/><rect x="11" y="42" width="2.2" height="2.2" fill="#fff"/><rect x="11" y="46" width="2.2" height="2.2" fill="#fff"/><rect x="11" y="50" width="2.2" height="2.2" fill="#fff"/><rect x="15" y="42" width="2.2" height="2.2" fill="#fff"/><rect x="15" y="46" width="2.2" height="2.2" fill="#fff"/><rect x="15" y="50" width="2.2" height="2.2" fill="#fff"/><rect x="19" y="42" width="2.2" height="2.2" fill="#fff"/><rect x="19" y="46" width="2.2" height="2.2" fill="#fff"/><rect x="19" y="50" width="2.2" height="2.2" fill="#fff"/><g fill="none" stroke="#fff" stroke-width="1.1"><circle cx="1033.5" cy="14.4" r="5.2"/><path d="M1030.6 14.4 H1036.4 M1037.3 18.2 L1041.7 22.6"/></g><g fill="none" stroke="#fff" stroke-width="1.1"><path d="M1071.6 15.2 V10.6 Q1071.6 9.6 1072.6 9.6 H1083.6 Q1084.6 9.6 1084.6 10.6 V21.6 Q1084.6 22.6 1083.6 22.6 H1077.6 M1081.6 12.5 V19.7"/><circle cx="1073.5" cy="18.3" r="2.7"/><path d="M1075.4 20.3 L1078.4 23.4"/></g><circle cx="1114.4" cy="16.2" r="1.05" fill="#fff"/><circle cx="1120" cy="16.2" r="1.05" fill="#fff"/><circle cx="1125.6" cy="16.2" r="1.05" fill="#fff"/><path d="M1160 16.5 H1170" fill="none" stroke="#fff" stroke-width="1.1"/><g fill="none" stroke="#fff" stroke-width="1.1"><rect x="1206.5" y="13.5" width="7" height="7" rx="1.2"/><path d="M1208.6 11.3 Q1208.9 10.9 1209.7 10.9 H1214.9 Q1216.1 10.9 1216.1 12.1 V17.3 Q1216.1 18.1 1215.7 18.4"/></g><path d="M1252.6 11 L1262.2 20.8 M1262.2 11 L1252.6 20.8" fill="none" stroke="#fff" stroke-width="1.1"/><g fill="none" stroke="#fff" stroke-width="1.2"><circle cx="1138.2" cy="45.8" r="3.9"/><path d="M1135.4 48.7 L1131.3 52.8"/></g><g fill="none" stroke="#fff" stroke-width="1.15"><path d="M1164.6 50.3 H1173.4 L1172.3 48.6 V46.2 A3.3 3.3 0 0 0 1165.7 46.2 V48.6 Z"/><path d="M1167.6 51.4 Q1169 53.4 1170.4 51.4"/><path d="M1169 42.2 V42.9"/></g><path d="M1205.99,48.51 L1205.67,49.56 L1204.07,49.80 L1203.53,50.45 L1203.59,52.07 L1202.62,52.58 L1201.32,51.62 L1200.48,51.70 L1199.39,52.89 L1198.34,52.57 L1198.10,50.97 L1197.45,50.43 L1195.83,50.49 L1195.32,49.52 L1196.28,48.22 L1196.20,47.38 L1195.01,46.29 L1195.33,45.24 L1196.93,45.00 L1197.47,44.35 L1197.41,42.73 L1198.38,42.22 L1199.68,43.18 L1200.52,43.10 L1201.61,41.91 L1202.66,42.23 L1202.90,43.83 L1203.55,44.37 L1205.17,44.31 L1205.68,45.28 L1204.72,46.58 L1204.80,47.42 Z" fill="none" stroke="#fff" stroke-width="1.1"/><circle cx="1200.5" cy="47.4" r="1.9" fill="none" stroke="#fff" stroke-width="1.1"/><path d="M1229.3 45.2 Q1229.3 42.3 1232.2 42.3 Q1235.2 42.3 1235.2 45 Q1235.2 46.8 1233.3 47.7 Q1232.2 48.3 1232.2 49.8 V50.4" fill="none" stroke="#fff" stroke-width="1.1"/><circle cx="1232.2" cy="52.6" r="0.75" fill="#fff"/><circle cx="1264.1" cy="48" r="10.8" fill="none" stroke="#fff" stroke-width="1.1"/><path d="M55.2 83.5 H44.6 M49.6 78.5 L44.6 83.5 L49.6 88.5" fill="none" stroke="#404448" stroke-width="1.1"/><path d="M1080.6 85 L1083.6 88.6 L1089.6 81.8" fill="none" stroke="#6e7378" stroke-width="1"/><path d="M1144.6 80 H1152.1 V91 L1148.35 88.3 L1144.6 91 Z" fill="#00818a"/><g fill="none" stroke="#00818a" stroke-width="1"><path d="M1172.8 83.5 H1167.5 V88.5 H1175.5 V85.6"/><path d="M1173.4 84.8 L1176.4 81.8"/></g><path d="M1174.2 80.9 L1177.4 80.9 L1177.4 84.1 Z" fill="#00818a"/><g fill="none" stroke="#00818a" stroke-width="1"><path d="M1201.5 80.4 L1197.4 84.5 M1197.3 81.2 V84.7 H1200.8"/><path d="M1191.3 90.5 L1195.4 86.4 M1192.1 86.2 H1195.6 V89.5"/></g><g fill="none" stroke="#00818a" stroke-width="1"><path d="M84.2 231.8 Q86.8 230.9 89.4 231.9 Q92 233.2 91.7 236.4 Q91.5 239.8 88.8 240.6 Q85.6 241.3 83.2 240.3 Q80.9 238.8 81.3 235.8 Q81.7 232.8 84.2 231.8 Z"/><path d="M83.6 238.6 L85.8 233.4 M87.6 231.6 L88.2 233 M86.4 239.6 L89.4 233.6" stroke-width="0.9"/></g><path d="M94.3 236.2 L98.2 239.8 L102.1 236.2" fill="none" stroke="#8a8e92" stroke-width="0.9"/><g fill="none" stroke="#00818a" stroke-width="0.9" opacity="0.85"><rect x="118.5" y="232.5" width="8.6" height="8.2"/></g><g fill="#00818a"><rect x="121" y="233.4" width="4.6" height="1.5"/><rect x="119.2" y="235.6" width="1.5" height="3.6"/></g><g><rect x="155" y="231" width="11" height="11" fill="#00818a"/><g fill="#fff"><rect x="156.4" y="232.8" width="3.2" height="1.2"/><rect x="156.4" y="235.4" width="1.3" height="1.3"/><rect x="158.3" y="235.4" width="1.3" height="1.3"/><rect x="156.4" y="237.6" width="1.3" height="1.3"/><rect x="158.3" y="237.6" width="1.3" height="1.3"/><rect x="156.4" y="239.6" width="3.2" height="1"/><rect x="161.2" y="232.8" width="3.6" height="1.2"/><rect x="161.2" y="235.2" width="3.6" height="5.4"/></g><rect x="162.4" y="236.4" width="1.2" height="1.4" fill="#00818a"/></g><g fill="none" stroke="#00818a" stroke-width="1.2"><rect x="258.6" y="232.6" width="10" height="8"/><path d="M259.2 239.6 L261 237.6 L262.4 238.2 L264.6 234.6 L266 234.4 L268.2 235.8"/></g><g fill="#00818a"><path d="M392 234.6 H397.6 V241 H392 Z"/><path d="M393.6 232 H400.2 L398.4 234 H392.2 Z"/><path d="M398.4 234.4 L401 231.8 V238.6 L398.6 241 Z"/></g><rect x="393.6" y="237.8" width="2.6" height="0.9" fill="#fff"/><g fill="none" stroke="#00818a" stroke-width="0.95"><path d="M1167.4 233 V239.4 H1174.6 V238.2"/><path d="M1169.6 236.9 Q1169.9 233.4 1174.3 233 V231.3 L1177.3 233.9 L1174.3 236.5 V234.9 Q1171.3 234.9 1169.6 236.9 Z" stroke-linejoin="round"/></g><path d="M1191 231.3 H1202 L1197.5 235.9 V240 Q1196.5 240.7 1195.5 240 V235.9 Z" fill="none" stroke="#00818a" stroke-width="0.95" stroke-linejoin="round"/><path d="M59 310.4 H67.4 M64 307 L67.4 310.4 L64 313.8" fill="none" stroke="#4a4f55" stroke-width="1"/><circle cx="229.3" cy="305.7" r="0.8" fill="#3c4046"/><circle cx="229.3" cy="309.8" r="0.8" fill="#3c4046"/><circle cx="229.3" cy="313.9" r="0.8" fill="#3c4046"/><path d="M106 314.6 H134.2" stroke="#222" stroke-width="1" stroke-dasharray="2.6 2.4"/></svg><svg style="left:0;top:0" width="1280" height="720"><path d="M613.2 144.0 L617.2 148.0 L621.2 144.0" fill="none" stroke="#5a6068" stroke-width="0.95"/><path d="M613.2 169.0 L617.2 173.0 L621.2 169.0" fill="none" stroke="#5a6068" stroke-width="0.95"/><path d="M613.2 194.0 L617.2 198.0 L621.2 194.0" fill="none" stroke="#5a6068" stroke-width="0.95"/><path d="M1195.2 144.0 L1199.2 148.0 L1203.2 144.0" fill="none" stroke="#5a6068" stroke-width="0.95"/></svg>
</body></html>
